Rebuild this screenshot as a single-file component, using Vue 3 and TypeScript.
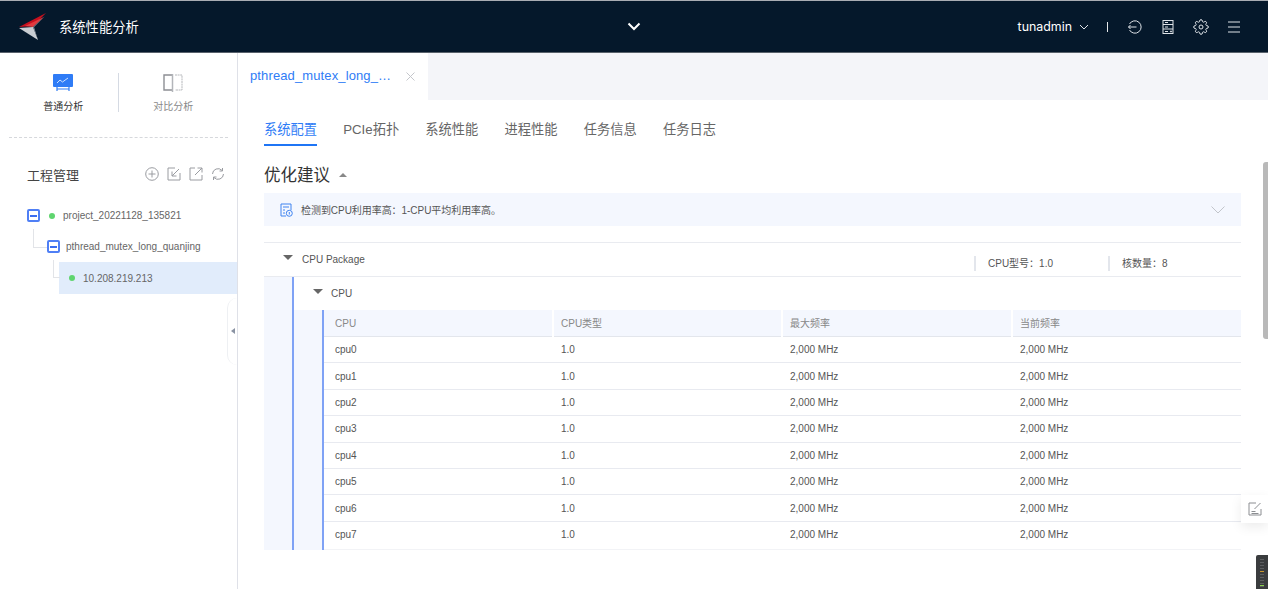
<script setup lang="ts">
const tabs: string[] = ['系统配置', 'PCIe拓扑', '系统性能', '进程性能', '任务信息', '任务日志']
const cols: string[] = ['CPU', 'CPU类型', '最大频率', '当前频率']
const rows: string[] = ['cpu0', 'cpu1', 'cpu2', 'cpu3', 'cpu4', 'cpu5', 'cpu6', 'cpu7']
</script>

<template>
  <div class="page">
    <header class="top">
      <div class="brand">
        <svg class="logo" width="30" height="30" viewBox="0 0 30 30">
          <polygon points="1,15 28,1 15,14" fill="#c8101e" />
          <polygon points="7,14 26,5 15,15" fill="#e33a3f" />
          <polygon points="1,16 15,15 20,28" fill="#c9cdd2" />
          <polygon points="15,15 27,4 16,15 20,28" fill="#8b929b" />
        </svg>
        <span class="brand-name">系统性能分析</span>
      </div>
      <svg class="center-chev" width="14" height="9" viewBox="0 0 14 9"><path d="M1.5 1.5 7 7l5.5-5.5" fill="none" stroke="#fff" stroke-width="2" /></svg>
      <div class="top-right">
        <span class="user">tunadmin</span>
        <svg class="user-chev" width="10" height="6" viewBox="0 0 10 6"><path d="M1 1l4 4 4-4" fill="none" stroke="#dfe3e8" stroke-width="1" /></svg>
        <span class="sep"></span>
        <svg class="ti" width="16" height="16" viewBox="0 0 16 16" fill="none" stroke="#dfe3e8"><path d="M2.5 5A6.2 6.2 0 1 1 2.5 11M1.5 8h8M3.5 6 1.5 8l2 2" /></svg>
        <svg class="ti" width="16" height="16" viewBox="0 0 16 16" fill="none" stroke="#dfe3e8"><rect x="3" y="1.5" width="10" height="13" /><path d="M3 5.5h10M3 10h10M5 3.5h3M5 8h3M5 12.5h3" /><circle cx="11" cy="12.5" r=".6" fill="#dfe3e8" /></svg>
        <svg class="ti" width="16" height="16" viewBox="0 0 24 24" fill="none" stroke="#dfe3e8" stroke-width="1.5"><circle cx="12" cy="12" r="3" /><path d="M19.4 15a1.65 1.65 0 0 0 .33 1.82l.06.06a2 2 0 0 1 0 2.83 2 2 0 0 1-2.83 0l-.06-.06a1.65 1.65 0 0 0-1.82-.33 1.65 1.65 0 0 0-1 1.51V21a2 2 0 0 1-2 2 2 2 0 0 1-2-2v-.09A1.65 1.65 0 0 0 9 19.4a1.65 1.65 0 0 0-1.82.33l-.06.06a2 2 0 0 1-2.83 0 2 2 0 0 1 0-2.83l.06-.06a1.65 1.65 0 0 0 .33-1.82 1.65 1.65 0 0 0-1.51-1H3a2 2 0 0 1-2-2 2 2 0 0 1 2-2h.09A1.65 1.65 0 0 0 4.6 9a1.65 1.65 0 0 0-.33-1.82l-.06-.06a2 2 0 0 1 0-2.83 2 2 0 0 1 2.83 0l.06.06a1.65 1.65 0 0 0 1.82.33H9a1.65 1.65 0 0 0 1-1.51V3a2 2 0 0 1 2-2 2 2 0 0 1 2 2v.09a1.65 1.65 0 0 0 1 1.51 1.65 1.65 0 0 0 1.82-.33l.06-.06a2 2 0 0 1 2.83 0 2 2 0 0 1 0 2.83l-.06.06a1.65 1.65 0 0 0-.33 1.82V9a1.65 1.65 0 0 0 1.51 1H21a2 2 0 0 1 2 2 2 2 0 0 1-2 2h-.09a1.65 1.65 0 0 0-1.51 1z" /></svg>
        <svg class="ti" width="16" height="16" viewBox="0 0 16 16" fill="none" stroke="#dfe3e8"><path d="M2 3h12M2 8h12M2 13h12" /></svg>
      </div>
    </header>

    <div class="body">
      <aside class="side">
        <div class="modes">
          <div class="mode active">
            <svg width="20" height="18" viewBox="0 0 20 18">
              <rect x="0" y="0" width="20" height="13" rx="1" fill="#2f7cf6" />
              <path d="M4 9l3-3 2.5 2L15 4" fill="none" stroke="#cfe1ff" stroke-width="1" />
              <path d="M4 13v4M16 13v4M4 15h12" fill="none" stroke="#2f7cf6" stroke-width="1.2" />
            </svg>
            <span>普通分析</span>
          </div>
          <div class="mode">
            <svg width="20" height="18" viewBox="0 0 20 18" fill="none">
              <path d="M9 1H1v15h8" stroke="#8d8f94" stroke-width="1.4" />
              <path d="M9.5 0v18" stroke="#b3b5ba" stroke-width="1.5" />
              <path d="M12 1h7v15h-7" stroke="#b5b7bb" stroke-width="1" stroke-dasharray="2 .6" />
            </svg>
            <span>对比分析</span>
          </div>
        </div>
        <div class="proj-head">
          <span class="proj-title">工程管理</span>
          <div class="proj-icons">
            <svg width="14" height="14" viewBox="0 0 14 14" fill="none" stroke="#9a9ca1"><circle cx="7" cy="7" r="6.3" /><path d="M3.5 7h7M7 3.5v7" /></svg>
            <svg width="14" height="14" viewBox="0 0 14 14" fill="none" stroke="#9a9ca1"><path d="M8 1H1v12h12V6" /><path d="M12 2 5 9M5 4.5V9h4.5" /></svg>
            <svg width="14" height="14" viewBox="0 0 14 14" fill="none" stroke="#9a9ca1"><path d="M6 1H1v12h12V8" /><path d="M6 8l7-7M8.5 1H13v4.5" /></svg>
            <svg width="14" height="14" viewBox="0 0 14 14" fill="none" stroke="#9a9ca1"><path d="M1.5 7a5.5 5.5 0 0 1 9.5-3.6M12.5 7A5.5 5.5 0 0 1 3 10.6" /><path d="M11.5 1v3h-3M2.5 13v-3h3" /></svg>
          </div>
        </div>
        <div class="tree">
          <div class="node n1">
            <span class="toggle"></span><i class="dot"></i><span>project_20221128_135821</span>
          </div>
          <div class="node n2">
            <span class="toggle"></span><span>pthread_mutex_long_quanjing</span>
          </div>
          <div class="node n3">
            <i class="dot"></i><span>10.208.219.213</span>
          </div>
        </div>
        <div class="handle"><i></i></div>
      </aside>

      <main class="main">
        <div class="tabbar">
          <div class="tab">
            <span>pthread_mutex_long_…</span>
            <svg width="9" height="9" viewBox="0 0 9 9"><path d="M.5.5l8 8M8.5.5l-8 8" stroke="#c4c6cb" /></svg>
          </div>
        </div>
        <div class="content">
          <nav class="subtabs">
            <span v-for="(t, i) in tabs" :key="t" class="subtab" :class="{ on: i === 0 }">{{ t }}</span>
          </nav>
          <div class="title">
            <span>优化建议</span><i class="up"></i>
          </div>
          <div class="alert">
            <svg width="13" height="14" viewBox="0 0 13 14" fill="none" stroke="#3f83f0">
              <path d="M6 13H1V1h10v6" />
              <path d="M3 4h6M3 7h2M3 10h2" />
              <circle cx="9.3" cy="10.3" r="3" fill="#f4f7fe" />
              <path d="M9.3 9v2.5" />
            </svg>
            <span class="alert-text">检测到CPU利用率高：1-CPU平均利用率高。</span>
            <svg class="alert-chev" width="14" height="8" viewBox="0 0 14 8"><path d="M.5.5 7 7 13.5.5" fill="none" stroke="#c2c5cb" /></svg>
          </div>

          <section class="pkg">
            <div class="pkg-head">
              <i class="down"></i>
              <span class="pkg-name">CPU Package</span>
              <div class="pkg-meta">
                <span class="meta m1">CPU型号：1.0</span>
                <span class="meta m2">核数量：8</span>
              </div>
            </div>
            <div class="pkg-body">
              <div class="cpu-head"><i class="down"></i><span>CPU</span></div>
              <div class="cpu-body">
                <div class="grid">
                  <div class="row head">
                    <span v-for="c in cols" :key="c">{{ c }}</span>
                  </div>
                  <div v-for="r in rows" :key="r" class="row">
                    <span>{{ r }}</span><span>1.0</span><span>2,000 MHz</span><span>2,000 MHz</span>
                  </div>
                </div>
              </div>
            </div>
          </section>
        </div>
      </main>
    </div>

    <div class="scroll"></div>
    <div class="float">
      <svg width="14" height="14" viewBox="0 0 14 14" fill="none" stroke="#8c8e92"><path d="M8 1H1v12h12V7" /><path d="M12.5 1 6.5 7M3.5 9.5h4M3.5 11.5h7" /></svg>
    </div>
    <div class="meter"><i class="bars"></i><i class="y"></i><i class="g"></i></div>
  </div>
</template>

<style>
html, body { margin: 0; overflow: hidden; background: #fff; }
</style>

<style scoped>
.page {
  position: relative;
  width: 1268px;
  height: 589px;
  overflow: hidden;
  display: flex;
  flex-direction: column;
  font-family: "Liberation Sans", "Noto Sans CJK SC", sans-serif;
  color: #444;
  background: #fff;
}
.top {
  height: 51px;
  flex: none;
  border-top: 1px solid #a9adb3;
  background: #05182b;
  display: flex;
  align-items: center;
  color: #fff;
  border-bottom: 1px solid #59626c;
  position: relative;
}
.brand { display: flex; align-items: center; padding-left: 18px; width: 582px; }
.brand-name { margin-left: 11px; font-size: 13.3px; }
.center-chev { margin-left: 27px; }
.top-right { margin-left: auto; display: flex; align-items: center; padding-right: 26px; }
.user { font-family: Inter, "Liberation Sans", sans-serif; font-size: 12.4px; }
.user-chev { margin-left: 7px; }
.sep { width: 1px; height: 10px; background: #e6e8ea; margin: 0 19px 0 18px; }
.ti { margin-right: 17px; }
.ti:last-child { margin-right: 0; }

.body { flex: 1; display: flex; min-height: 0; }
.side {
  width: 237px;
  flex: none;
  border-right: 1px solid #dfe1e8;
  position: relative;
}
.modes {
  margin: 0 9px;
  height: 85px;
  border-bottom: 1px dashed #d6d8dc;
  display: flex;
  padding-top: 20px;
  box-sizing: border-box;
}
.mode {
  width: 110px;
  height: 39px;
  display: flex;
  flex-direction: column;
  align-items: center;
  gap: 8px;
  font-size: 10px;
  color: #888;
  line-height: 14px;
  padding-top: 1px;
  box-sizing: border-box;
}
.mode svg { flex: none; }
.mode span { flex: none; }
.mode:first-child { border-right: 1px solid #d5dae3; color: #333; }
.proj-head {
  display: flex;
  align-items: center;
  justify-content: space-between;
  padding: 26px 12px 0 27px;
  height: 20px;
}
.proj-title { font-size: 13px; color: #444; }
.proj-icons { display: flex; gap: 8px; }
.tree { margin-top: 16px; font-size: 10px; color: #666; }
.node { display: flex; align-items: center; position: relative; }
.toggle {
  width: 9px;
  height: 9px;
  border: 2px solid #4f7ff5;
  border-radius: 2px;
  position: relative;
  flex: none;
}
.toggle::after {
  content: "";
  position: absolute;
  left: 1px;
  right: 1px;
  top: 3.5px;
  height: 2px;
  background: #3a6df0;
}
.dot { width: 6px; height: 6px; border-radius: 50%; background: #5fd56f; flex: none; }
.n1 { height: 31px; padding-left: 27px; }
.n1 .dot { margin: 0 8px 0 9px; }
.n2 { height: 31px; padding-left: 47px; }
.n2 .toggle { margin-right: 6px; }
.n2::before {
  content: "";
  position: absolute;
  left: 33px;
  top: -2px;
  width: 13px;
  height: 18px;
  border-left: 1px solid #e2e4e8;
  border-bottom: 1px solid #e2e4e8;
}
.n3 {
  height: 32px;
  margin-left: 59px;
  padding-left: 10px;
  background: #e1ecfb;
}
.n3 .dot { margin-right: 8px; }
.n3::before {
  content: "";
  position: absolute;
  left: -6px;
  top: -2px;
  width: 6px;
  height: 17px;
  border-left: 1px solid #e2e4e8;
  border-bottom: 1px solid #e2e4e8;
}
.handle {
  position: absolute;
  right: 0;
  top: 245px;
  width: 10px;
  height: 67px;
  background: #fff;
  border-left: 1px solid #eef0f3;
  border-radius: 12px 0 0 12px;
  box-sizing: border-box;
}
.handle i {
  position: absolute;
  right: 2px;
  top: 30px;
  border: 3px solid transparent;
  border-right: 4px solid #8a93a3;
  border-left: 0;
}

.main { flex: 1; min-width: 0; display: flex; flex-direction: column; }
.tabbar { height: 47px; flex: none; background: #f4f5f9; display: flex; }
.tab {
  width: 190px;
  background: #fff;
  display: flex;
  align-items: center;
  box-sizing: border-box;
  padding: 0 0 3px 12px;
  font-size: 13px;
  color: #2f7cf6;
  letter-spacing: .12px;
  white-space: nowrap;
}
.tab svg { margin: 2px 0 0 15px; }
.content { padding: 0 27px 0 26px; }
.subtabs {
  display: flex;
  gap: 26.2px;
  height: 46px;
  padding-top: 20px;
  box-sizing: border-box;
}
.subtab { font-size: 13.25px; line-height: 20px; height: 26px; color: #666; box-sizing: border-box; }
.subtab.on { color: #2f7cf6; border-bottom: 2px solid #1f75f5; }
.title {
  height: 47px;
  box-sizing: border-box;
  padding-top: 17px;
  display: flex;
  align-items: flex-start;
  font-size: 16.5px;
  line-height: 24px;
  color: #333;
}
.up {
  margin: 10px 0 0 9px;
  border: 4.5px solid transparent;
  border-bottom: 4px solid #888;
  border-top: 0;
}
.alert {
  height: 33px;
  background: #f4f7fe;
  display: flex;
  align-items: center;
  padding-left: 16px;
  font-size: 10px;
  color: #555;
}
.alert-text { margin-left: 8px; letter-spacing: -.05px; }
.alert-chev { margin-left: auto; margin-right: 16px; }

.pkg { margin-top: 16px; border-top: 1px solid #e9ebf0; font-size: 10px; color: #555; }
.pkg-head {
  height: 33px;
  display: flex;
  align-items: center;
  border-bottom: 1px solid #e9ebf0;
  position: relative;
}
.down {
  border: 5px solid transparent;
  border-top: 5px solid #666;
  border-bottom: 0;
  flex: none;
}
.pkg-head .down { margin: -4px 9px 0 19px; }
.pkg-name { margin-top: -1px; }
.pkg-meta { margin-left: auto; display: flex; padding-top: 8px; }
.meta { border-left: 2px solid #e3e6ec; line-height: 15px; padding-left: 12px; }
.m1 { width: 120px; }
.m2 { width: 119px; }
.pkg-body { background: #f4f7fe; padding-left: 28px; }
.cpu-head {
  height: 33px;
  background: #fff;
  border-left: 2px solid #7fa2f5;
  display: flex;
  align-items: center;
  box-sizing: border-box;
}
.cpu-head .down { margin: -4px 8px 0 19px; }
.cpu-head span { margin-top: -1px; }
.cpu-body { border-left: 2px solid #7fa2f5; padding-left: 28px; }
.grid { border-left: 2px solid #7fa2f5; background: #fff; }
.row {
  display: grid;
  grid-template-columns: 228px 229px 230px 1fr;
  height: 26.4px;
  align-items: center;
  border-bottom: 1px solid #e8eaf0;
  box-sizing: border-box;
  color: #555;
}
.row span { padding-left: 9px; }
.row span:first-child { padding-left: 11px; }
.row.head { background: #f4f7fe; color: #888; height: 27px; border-bottom: 1px solid #e3e6ec; }
.row.head span { line-height: 27px; border-left: 2px solid #fff; padding-left: 7px; }
.row.head span:first-child { border-left: 0; padding-left: 11px; }
.row:last-child { border-bottom-color: #f2f3f6; height: 28px; padding-bottom: 1.6px; }

.scroll {
  position: absolute;
  right: 0;
  top: 162px;
  width: 5px;
  height: 177px;
  background: #b9b9b9;
  border-radius: 3px 0 0 3px;
}
.float {
  position: absolute;
  right: 0;
  top: 495px;
  width: 27px;
  height: 28px;
  background: #fff;
  box-shadow: 0 4px 12px rgba(0, 0, 0, .08);
  display: flex;
  align-items: center;
  justify-content: center;
}
.meter {
  position: absolute;
  right: 0;
  top: 555px;
  width: 12px;
  height: 34px;
  background: #3a3c3e;
  border-radius: 2px 0 0 0;
}
.meter i { position: absolute; left: 4px; width: 4px; height: 1px; }
.meter .bars {
  top: 4px;
  height: 28px;
  background: repeating-linear-gradient(#5c5e60 0 1px, transparent 1px 3px);
}
.meter .y { top: 16px; background: #c8962c; }
.meter .g { top: 30px; background: #8ad04c; }
</style>
